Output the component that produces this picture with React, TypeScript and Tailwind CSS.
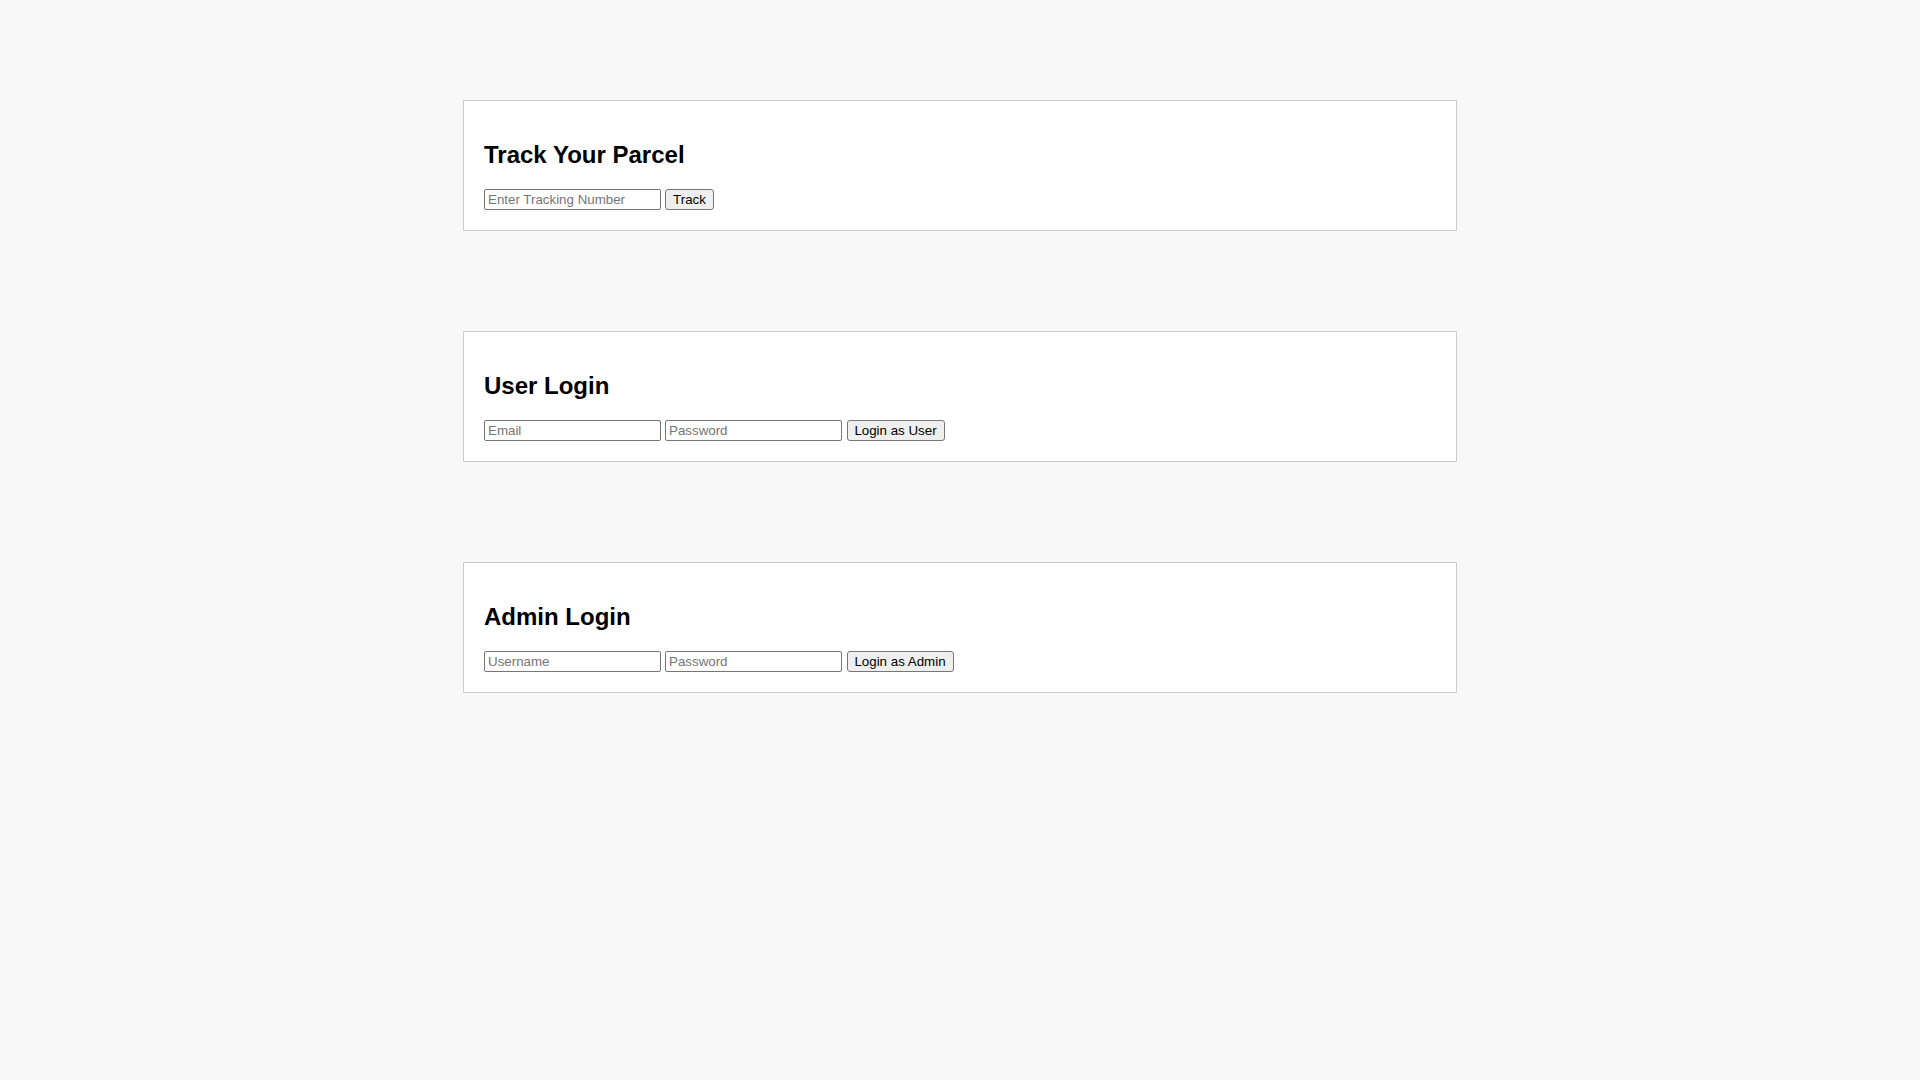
import React from "react";

const inputCls =
  "w-[177px] h-[21px] border border-[#767676] rounded-[2px] bg-white px-[3px] text-[13.33px] leading-[15px] text-black placeholder:text-[#757575] outline-none font-['Liberation_Sans',Arial,sans-serif]";
const btnCls =
  "h-[21px] border border-[#767676] rounded-[3px] bg-[#efefef] text-[13.33px] leading-[15px] text-black flex items-center justify-center font-['Liberation_Sans',Arial,sans-serif]";

function Card({ title, children }: { title: string; children: React.ReactNode }) {
  return (
    <div className="w-[994px] border border-[#cccccc] bg-white p-[20px]">
      <h2 className="my-[19.92px] text-[24px] leading-[27.6px] font-bold text-black">{title}</h2>
      <div className="flex items-end h-[21.5px]">{children}</div>
    </div>
  );
}

export default function App() {
  return (
    <div className="min-h-screen bg-[#f8f8f8] flex flex-col items-center pt-[100px] gap-[100px] font-['Liberation_Sans',Arial,sans-serif]">
      <Card title="Track Your Parcel">
        <input className={inputCls} placeholder="Enter Tracking Number" />
        <button className={btnCls + " ml-[4px] w-[49px]"}>Track</button>
      </Card>
      <Card title="User Login">
        <input className={inputCls} placeholder="Email" />
        <input className={inputCls + " ml-[4px]"} placeholder="Password" type="password" />
        <button className={btnCls + " ml-[4.5px] w-[98px]"}>Login as User</button>
      </Card>
      <Card title="Admin Login">
        <input className={inputCls} placeholder="Username" />
        <input className={inputCls + " ml-[4px]"} placeholder="Password" type="password" />
        <button className={btnCls + " ml-[4.5px] w-[107px]"}>Login as Admin</button>
      </Card>
    </div>
  );
}
